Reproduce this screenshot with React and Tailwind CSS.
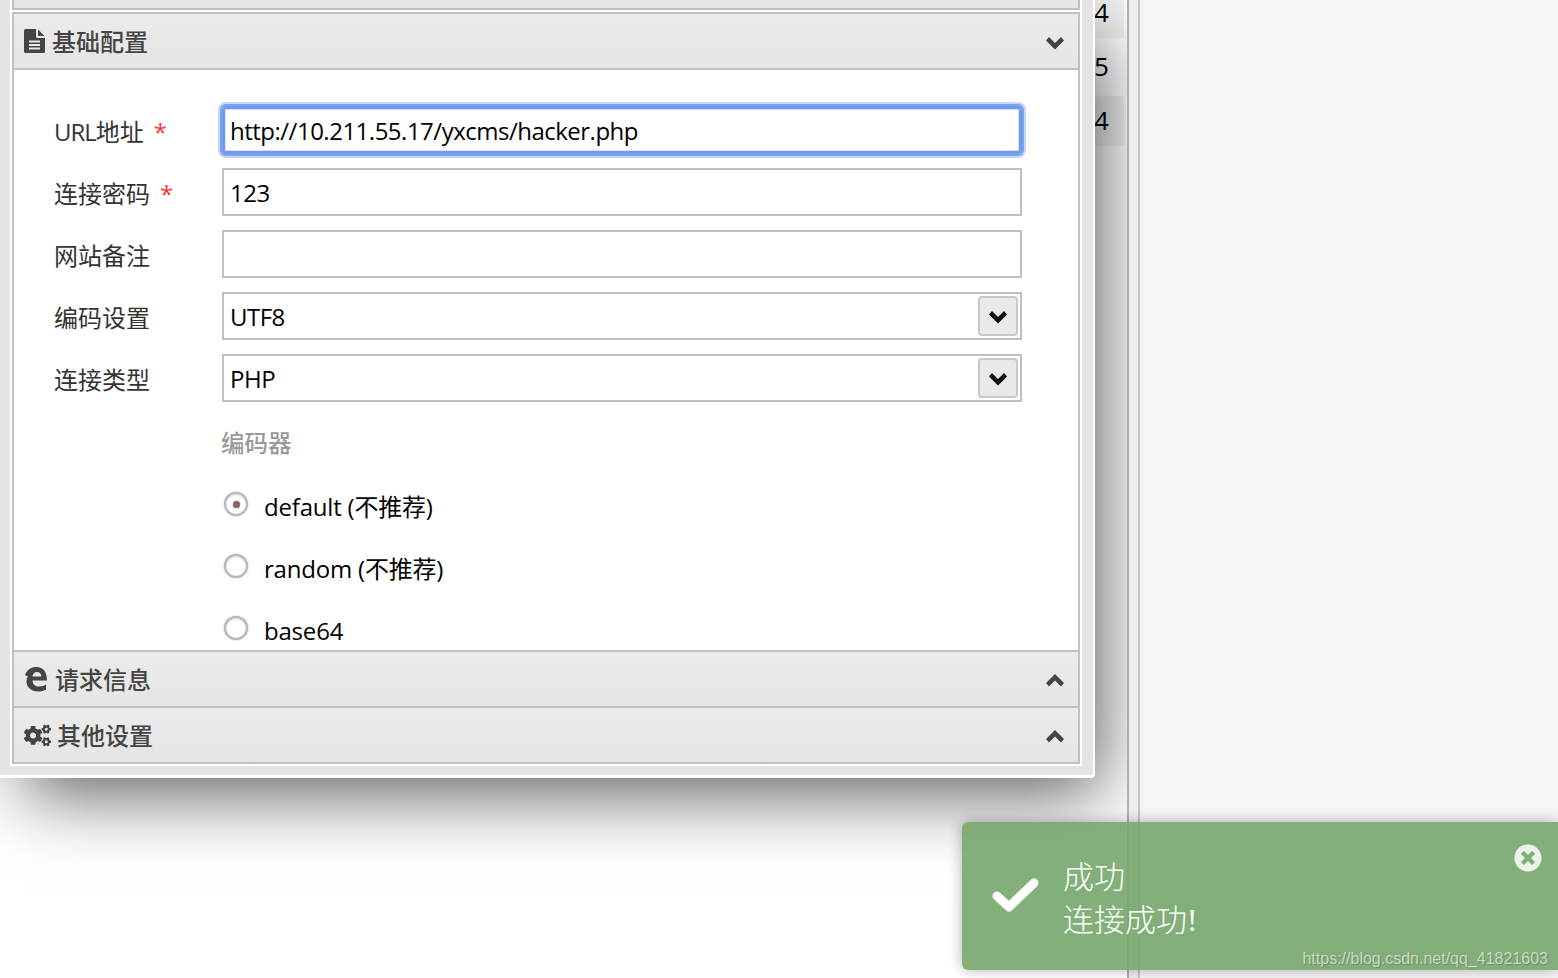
import React from 'react';
import { FaCogs, FaTimesCircle } from 'react-icons/fa';

function FileIcon() {
  return (
    <svg width="21" height="24" viewBox="0 0 21 24" className="shrink-0">
      <path d="M1.5 0H12V7.5Q12 9 13.5 9H21V22.5Q21 24 19.5 24H1.5Q0 24 0 22.5V1.5Q0 0 1.5 0Z" fill="#444" />
      <path d="M14 0.5L20.5 7H14Z" fill="#444" />
      <rect x="5" y="11.5" width="11" height="2" fill="#e8e8e8" />
      <rect x="5" y="15" width="11" height="2" fill="#e8e8e8" />
      <rect x="5" y="18.5" width="11" height="2" fill="#e8e8e8" />
    </svg>
  );
}

// old style edge "e", react-icons only has the new swirl
function EdgeIcon() {
  return (
    <svg width="24" height="26" viewBox="0 0 24 26" className="shrink-0">
      <path
        d="M1 9C3 3.5 7.5 1 12.5 1C19 1 23 6 23 14.5H8.5C8.8 18.5 11.5 20.5 15 20.5C18 20.5 20.5 19.5 22 18.5V23.5C19.5 25 17 25.5 14 25.5C7 25.5 2.5 21 2.5 15.5C2.5 13.5 3 11.5 4 10C3 10.2 2 9.8 1 9ZM8.5 10.5H17.5C17.3 7.8 15.5 6 13 6C10.5 6 8.8 7.8 8.5 10.5Z"
        fill="#444"
        fillRule="evenodd"
      />
    </svg>
  );
}

function Chevron({ up, color = '#444' }) {
  return (
    <svg width="18" height="13" viewBox="0 0 18 13" className="shrink-0">
      <path
        d={up ? 'M9 0L18 9L15 12.5L9 6.5L3 12.5L0 9Z' : 'M0 3.5L3 0L9 6L15 0L18 3.5L9 12.5Z'}
        fill={color}
      />
    </svg>
  );
}

function PanelHeader({ icon, title, open, gap }) {
  return (
    <div className={`flex h-[54px] items-center bg-gradient-to-b from-[#ebebeb] to-[#e5e5e5] pl-[10px] pr-[14px] text-[24px] font-medium text-[#444] ${gap}`}>
      {icon}
      <span className="flex-1 pt-[2px] leading-none">{title}</span>
      <div className={open ? 'pt-[5px]' : 'pt-[2px]'}>
        <Chevron up={!open} />
      </div>
    </div>
  );
}

function FormRow({ label, required, children }) {
  return (
    <div className="mb-[14px] flex h-[48px] items-center">
      <div className="w-[168px] shrink-0 pt-[3px] text-[24px] leading-none text-[#333]">
        {label}
        {required && <span className="ml-[10px] text-[#f33]">*</span>}
      </div>
      {children}
    </div>
  );
}

function TextBox({ value, focused }) {
  return (
    <div
      className={
        focused
          ? 'flex h-[48px] w-[800px] items-center rounded-[4px] border-[3px] border-[#6f9bee] pl-[5px] pt-[2px] text-black tracking-[-0.5px] shadow-[0_0_0_2px_#7aa3f0,0_0_0_4px_#c5d7f7,inset_0_0_0_1px_#d6e3fa]'
          : 'flex h-[48px] w-[800px] items-center border-2 border-[#c0c0c0] pl-[6px] pt-[2px] text-black tracking-[-0.5px]'
      }
    >
      {value}
    </div>
  );
}

function SelectBox({ value }) {
  return (
    <div className="flex h-[48px] w-[800px] items-center justify-between border-2 border-[#c0c0c0] pl-[6px] pr-[2px] text-black tracking-[-0.5px]">
      <span className="pt-[2px]">{value}</span>
      <div className="flex h-[40px] w-[40px] items-center justify-center rounded-[4px] border-2 border-[#c8c8c8] bg-[#e9e9e9] pt-[2px]">
        <Chevron color="#111" />
      </div>
    </div>
  );
}

function Radio({ label, checked }) {
  return (
    <div className="mb-[14px] flex h-[48px] items-center pl-[170px]">
      <div className="mb-[4px] flex h-[24px] w-[24px] shrink-0 items-center justify-center rounded-full border-2 border-[#b8b8b8] bg-white shadow-[0_0_2px_rgba(0,0,0,0.3),inset_0_1px_2px_rgba(0,0,0,0.15)]">
        {checked && <div className="h-[7px] w-[7px] rounded-full bg-[#8a6464] shadow-[0_0_2px_rgba(138,100,100,0.7)]" />}
      </div>
      <span className="ml-[16px] pt-[1px] leading-none text-black tracking-[-0.2px]">{label}</span>
    </div>
  );
}

const numbers = [
  { value: '4', cls: 'h-[38px] bg-black/5 items-end' },
  { value: '5', cls: 'h-[58px] items-center' },
  { value: '4', cls: 'h-[50px] bg-black/5 items-center' },
];

export default function App() {
  return (
    <div className="relative flex h-[978px] w-[1558px] overflow-hidden bg-white font-['Open_Sans','Noto_Sans_CJK_SC',sans-serif] text-[24px]">
      {/* left pane, the dialog sits over the table */}
      <div className="relative h-full w-[1127px] shrink-0 overflow-hidden bg-white">
        <div className="ml-[1094px] w-[30px] text-[26px] leading-none text-black">
          {numbers.map((n, i) => (
            <div key={i} className={`flex ${n.cls}`}>
              <span className={i === 0 ? 'pb-[13px]' : 'pb-[3px]'}>{n.value}</span>
            </div>
          ))}
        </div>

        <div className="absolute left-0 top-0 w-[1095px] rounded-br-[4px] border-b-[3px] border-r-2 border-white bg-[#e4e4e4] pb-[9px] pl-[10px] pr-[11px] shadow-[15px_25px_70px_-10px_rgba(0,0,0,0.65)]">
          <div className="bg-white px-[2px] pb-[2px]">
            <div className="h-[10px] border-x-2 border-b-2 border-[#c0c0c0] bg-[#e6e6e6]" />
            <div className="mt-[2px] border-2 border-[#c0c0c0] bg-white">
              <PanelHeader title="基础配置" open gap="gap-[7px]" icon={<FileIcon />} />
              <div className="h-[584px] overflow-hidden border-y-2 border-[#c0c0c0] pl-[40px] pt-[36px]">
                <FormRow
                  label={
                    <>
                      <span className="tracking-[-1px]">URL</span>地址
                    </>
                  }
                  required
                >
                  <TextBox value="http://10.211.55.17/yxcms/hacker.php" focused />
                </FormRow>
                <FormRow label="连接密码" required>
                  <TextBox value="123" />
                </FormRow>
                <FormRow label="网站备注">
                  <TextBox value="" />
                </FormRow>
                <FormRow label="编码设置">
                  <SelectBox value="UTF8" />
                </FormRow>
                <FormRow label="连接类型">
                  <SelectBox value="PHP" />
                </FormRow>
                <div className="mb-[14px] flex h-[52px] items-center pl-[167px] pt-[4px] text-[23.5px] font-medium text-[#999]">
                  编码器
                </div>
                <Radio label="default (不推荐)" checked />
                <Radio label="random (不推荐)" />
                <Radio label="base64" />
              </div>
              <PanelHeader title="请求信息" gap="gap-[7px]" icon={<EdgeIcon />} />
              <div className="h-[2px] bg-[#c0c0c0]" />
              <PanelHeader title="其他设置" gap="gap-[6px]" icon={<FaCogs size={27} color="#444" />} />
            </div>
          </div>
        </div>
      </div>

      {/* scroll strip */}
      <div className="h-full w-[13px] shrink-0 border-x-2 border-l-[#b0b0b0] border-r-[#c4c4c4] bg-[#eeeeee]" />
      <div className="h-full flex-1 bg-[#f5f5f5]" />

      {/* toast */}
      <div className="absolute bottom-[8px] right-0 flex h-[148px] w-[596px] items-center rounded-l-[6px] bg-[#75a76c]/90 shadow-[0_0_14px_rgba(0,0,0,0.3)]">
        <svg width="50" height="40" viewBox="0 0 50 40" className="ml-[29px] shrink-0">
          <path d="M6 20L18 31L43 7" fill="none" stroke="#fff" strokeWidth="9" strokeLinecap="round" strokeLinejoin="round" />
        </svg>
        <div className="ml-[22px] pt-[5px] font-['Liberation_Serif','Noto_Sans_CJK_SC',serif] text-[31px] font-light leading-[43px] text-white">
          <div>成功</div>
          <div>连接成功!</div>
        </div>
        <div className="absolute right-[16px] top-[22px] text-white/85">
          <FaTimesCircle size={28} />
        </div>
      </div>

      {/* watermark */}
      <div className="absolute bottom-[11px] right-[10px] font-['Liberation_Sans',sans-serif] text-[16px] leading-none text-white/60 [text-shadow:1px_1px_1px_rgba(0,0,0,0.2)]">
        https://blog.csdn.net/qq_41821603
      </div>
    </div>
  );
}
